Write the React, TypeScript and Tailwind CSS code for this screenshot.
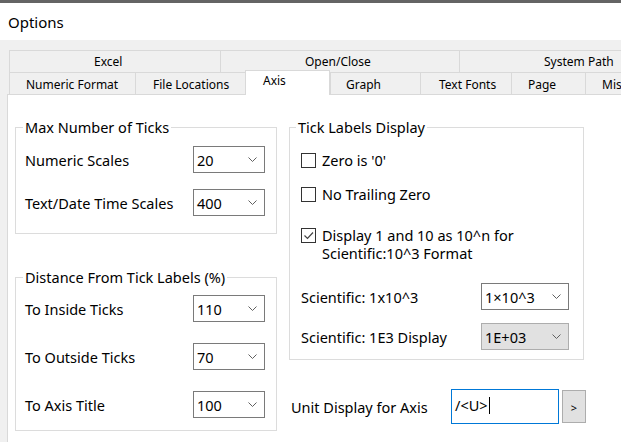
import React from "react";

const base = "font-['Noto_Sans',sans-serif] text-black";

function Chevron() {
  return (
    <svg width="9" height="5" viewBox="0 0 9 5" className="shrink-0">
      <polyline points="0.5,0.5 4.5,4.5 8.5,0.5" fill="none" stroke="#606060" strokeWidth="1" />
    </svg>
  );
}

function Combo({ value, wide, disabled }: { value: string; wide?: boolean; disabled?: boolean }) {
  return (
    <div
      className={`flex h-[27px] items-center justify-between border pl-[3px] pr-[7px] ${
        wide ? "w-[88px]" : "w-[72px]"
      } ${disabled ? "border-[#adadad] bg-[#e1e1e1]" : "border-[#7a7a7a] bg-white"}`}
    >
      <span className="leading-[20px]">{value}</span>
      <Chevron />
    </div>
  );
}

function Row({ label, value }: { label: string; value: string }) {
  return (
    <div className="flex items-center justify-between">
      <span className="leading-[20px]">{label}</span>
      <Combo value={value} />
    </div>
  );
}

function Check({ checked, children, className }: { checked?: boolean; children: React.ReactNode; className?: string }) {
  return (
    <div className={`flex items-start gap-[6px] ${className ?? ""}`}>
      <div className="mt-[2px] flex h-[15px] w-[15px] shrink-0 items-center justify-center border border-[#333333] bg-white">
        {checked && (
          <svg width="13" height="13" viewBox="0 0 13 13">
            <polyline points="2.5,6.5 5.5,9.5 11,3.5" fill="none" stroke="#444444" strokeWidth="1.2" />
          </svg>
        )}
      </div>
      <div className="leading-[18px]">{children}</div>
    </div>
  );
}

const tabsTop = [
  { name: "Excel", w: "w-[211px]" },
  { name: "Open/Close", w: "w-[239px]" },
  { name: "System Path", w: "w-[240px]" },
];

const tabsBottom = [
  { name: "Numeric Format", w: "w-[126px]", pl: "pl-[16px]" },
  { name: "File Locations", w: "w-[110px]", pl: "pl-[17px]" },
  { name: "Axis", w: "w-[85px]", pl: "pl-[17px]", active: true },
  { name: "Graph", w: "w-[90px]", pl: "pl-[15px]" },
  { name: "Text Fonts", w: "w-[91px]", pl: "pl-[18px]" },
  { name: "Page", w: "w-[74px]", pl: "pl-[16px]" },
  { name: "Misc", w: "w-[80px]", pl: "pl-[16px]" },
];

export default function App() {
  return (
    <div className={`${base} flex h-[442px] w-[621px] flex-col overflow-hidden bg-[#f0f0f0] text-[14.5px]`}>
      <div className="h-[3px] shrink-0 bg-[#646464]" />
      <div className="flex h-[37px] shrink-0 items-center justify-between bg-white pl-[8px]">
        <span className="text-[15px] leading-[20px]">Options</span>
        <span className="mr-[-7px] text-[#777777]">?</span>
      </div>

      <div className="flex flex-1 flex-col pl-[7px] pt-[10px]">
        {/* tabs */}
        <div className="ml-[2px] flex flex-col text-[12px]">
          <div className="flex">
            {tabsTop.map((t) => (
              <div
                key={t.name}
                className={`h-[22px] shrink-0 border-l border-t border-[#d9d9d9] pl-[84px] pt-[1px] leading-[20px] ${t.w}`}
              >
                {t.name}
              </div>
            ))}
          </div>
          <div className="flex h-[22px] items-end">
            {tabsBottom.map((t) =>
              t.active ? (
                <div
                  key={t.name}
                  className={`relative z-10 mb-[-1px] h-[25px] shrink-0 border-x border-t border-[#d9d9d9] bg-white pt-[1px] leading-[18px] ${t.w} ${t.pl}`}
                >
                  {t.name}
                </div>
              ) : (
                <div
                  key={t.name}
                  className={`h-[22px] shrink-0 border-l border-t border-[#d9d9d9] pt-[1px] leading-[21px] ${t.w} ${t.pl}`}
                >
                  {t.name}
                </div>
              )
            )}
          </div>
        </div>

        {/* panel */}
        <div className="flex flex-1 border-l border-t border-[#d9d9d9] bg-white pl-[7px] pt-[22px]">
          <div className="flex w-[262px] shrink-0 flex-col">
            <fieldset className="border border-[#dcdcdc] pb-[17px] pl-[9px] pr-[11px]">
              <legend className="ml-[-2px] px-[2px] leading-[20px]">Max Number of Ticks</legend>
              <div className="mt-[9px] flex flex-col gap-[16px]">
                <Row label="Numeric Scales" value="20" />
                <Row label="Text/Date Time Scales" value="400" />
              </div>
            </fieldset>

            <fieldset className="mt-[33px] border border-[#dcdcdc] pb-[12px] pl-[9px] pr-[11px]">
              <legend className="ml-[-2px] px-[2px] leading-[20px]">Distance From Tick Labels (%)</legend>
              <div className="mt-[8px] flex flex-col gap-[21px]">
                <Row label="To Inside Ticks" value="110" />
                <Row label="To Outside Ticks" value="70" />
                <Row label="To Axis Title" value="100" />
              </div>
            </fieldset>
          </div>

          <div className="ml-[12px] flex w-[295px] shrink-0 flex-col">
            <fieldset className="border border-[#dcdcdc] pb-[9px] pl-[11px] pr-[14px]">
              <legend className="ml-[-5px] px-[2px] leading-[20px]">Tick Labels Display</legend>
              <Check className="mt-[14px]">Zero is '0'</Check>
              <Check className="mt-[16px]">No Trailing Zero</Check>
              <Check checked className="mt-[23px]">
                Display 1 and 10 as 10^n for
                <br />
                Scientific:10^3 Format
              </Check>
              <div className="mt-[21px] flex items-center justify-between">
                <span className="leading-[20px]">Scientific: 1x10^3</span>
                <Combo value="1×10^3" wide />
              </div>
              <div className="mt-[13px] flex items-center justify-between">
                <span className="leading-[20px]">Scientific: 1E3 Display</span>
                <Combo value="1E+03" wide disabled />
              </div>
            </fieldset>

            <div className="mt-[29px] flex items-center pl-[2px]">
              <span className="w-[160px] shrink-0 leading-[20px]">Unit Display for Axis</span>
              <div className="flex h-[35px] w-[108px] shrink-0 items-center border border-[#0078d7] bg-white pb-[3px] pl-[3px]">
                <span className="leading-[20px]">/&lt;U&gt;</span>
                <span className="ml-[1px] h-[17px] w-[1px] bg-black" />
              </div>
              <div className="ml-[3px] flex h-[33px] w-[24px] shrink-0 items-center justify-center border border-[#adadad] bg-[#e1e1e1] pt-[2px] text-[11px] leading-[14px]">
                &gt;
              </div>
            </div>
          </div>
        </div>
      </div>
    </div>
  );
}
